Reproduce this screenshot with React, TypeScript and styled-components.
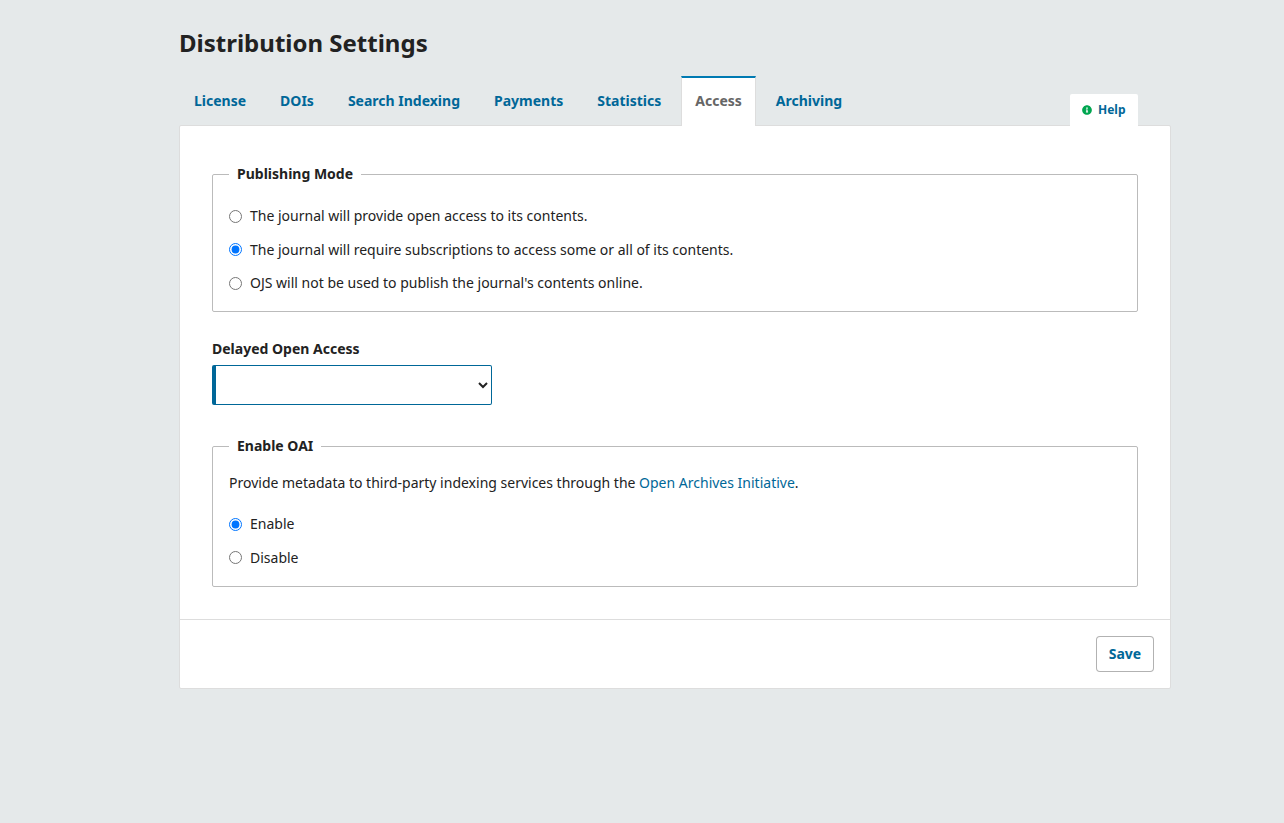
import React from 'react';
import styled, { createGlobalStyle } from 'styled-components';
import { FaInfoCircle } from 'react-icons/fa';

const TABS = ['License', 'DOIs', 'Search Indexing', 'Payments', 'Statistics', 'Access', 'Archiving'];

const MODES = [
  { id: 'open', label: 'The journal will provide open access to its contents.' },
  { id: 'subscription', label: 'The journal will require subscriptions to access some or all of its contents.' },
  { id: 'none', label: "OJS will not be used to publish the journal's contents online." },
];

const App = () => (
  <>
    <GlobalStyle />
    <Page>
      <Title>Distribution Settings</Title>
      <TabBar>
        <Tabs>
          {TABS.map((tab) => (
            <Tab key={tab} $active={tab === 'Access'}>
              {tab}
            </Tab>
          ))}
        </Tabs>
        <HelpButton>
          <FaInfoCircle size={10} color="#00a650" />
          Help
        </HelpButton>
      </TabBar>
      <Panel>
        <PanelBody>
          <Fieldset>
            <Legend>Publishing Mode</Legend>
            <Options>
              {MODES.map((mode) => (
                <Option key={mode.id}>
                  <Radio name="mode" defaultChecked={mode.id === 'subscription'} />
                  {mode.label}
                </Option>
              ))}
            </Options>
          </Fieldset>
          <Field>
            <FieldLabel htmlFor="delayed">Delayed Open Access</FieldLabel>
            <Select id="delayed">
              <option value=""></option>
            </Select>
          </Field>
          <Fieldset>
            <Legend>Enable OAI</Legend>
            <Description>
              Provide metadata to third-party indexing services through the{' '}
              <TextLink href="#!">Open Archives Initiative</TextLink>.
            </Description>
            <Options>
              <Option>
                <Radio name="oai" defaultChecked />
                Enable
              </Option>
              <Option>
                <Radio name="oai" />
                Disable
              </Option>
            </Options>
          </Fieldset>
        </PanelBody>
        <PanelFooter>
          <SaveButton>Save</SaveButton>
        </PanelFooter>
      </Panel>
    </Page>
  </>
);

export default App;

const GlobalStyle = createGlobalStyle`
  html, body {
    margin: 0;
    height: 100%;
    background: #e5e9ea;
  }
  body {
    font-family: 'Noto Sans', sans-serif;
    font-size: 14px;
    line-height: 20px;
    color: #222;
  }
`;

const Page = styled.main`
  width: 992px;
  margin-left: 179px;
  padding-top: 27px;
`;

const Title = styled.h1`
  margin: 0;
  font-size: 24px;
  line-height: 32px;
  font-weight: 700;
  color: #222;
`;

const TabBar = styled.div`
  display: flex;
  align-items: flex-end;
  justify-content: space-between;
  height: 50px;
  margin-top: 17px;
  margin-bottom: -1px;
  padding-left: 1px;
  padding-right: 33px;
  position: relative;
  z-index: 1;
`;

const Tabs = styled.nav`
  display: flex;
  gap: 6px;
  height: 100%;
`;

const Tab = styled.a<{ $active?: boolean }>`
  display: flex;
  align-items: center;
  padding: 0 13px 2px;
  font-size: 14px;
  font-weight: 700;
  border: 1px solid transparent;
  border-bottom: none;
  color: ${({ $active }) => ($active ? '#666' : '#006798')};
  ${({ $active }) =>
    $active &&
    `
    background: #fff;
    border-color: #ddd;
    border-top: 2px solid #007ab2;
    padding-bottom: 3px;
  `}
`;

const HelpButton = styled.button`
  display: flex;
  align-items: center;
  gap: 6px;
  height: 32px;
  width: 68px;
  padding: 0 0 1px 12px;
  border: none;
  border-radius: 2px 2px 0 0;
  background: #fff;
  color: #006798;
  font-family: inherit;
  font-size: 12px;
  font-weight: 700;
`;

const Panel = styled.section`
  background: #fff;
  border: 1px solid #ddd;
  border-radius: 2px;
`;

const PanelBody = styled.div`
  display: flex;
  flex-direction: column;
  gap: 27px;
  padding: 38px 32px 32px;
`;

const Fieldset = styled.fieldset`
  margin: 0;
  padding: 17px 16px 18px;
  border: 1px solid #bbb;
  border-radius: 2px;
  min-width: 0;
`;

const Legend = styled.legend`
  padding: 0 8px;
  font-size: 14px;
  line-height: 20px;
  font-weight: 700;
`;

const Options = styled.div`
  display: flex;
  flex-direction: column;
  gap: 13.5px;

  legend + & {
    margin-top: 5px;
  }
`;

const Option = styled.label`
  display: flex;
  align-items: center;
  gap: 8px;
  font-size: 14px;
  line-height: 20px;
`;

const Radio = styled.input.attrs({ type: 'radio' })`
  width: 13px;
  height: 13px;
  margin: 0;
  flex: none;
`;

const Description = styled.p`
  margin: 0 0 21px;
  font-size: 14px;
  line-height: 20px;
`;

const TextLink = styled.a`
  color: #006798;
  text-decoration: none;
`;

const Field = styled.div`
  display: flex;
  flex-direction: column;
  align-items: flex-start;
  margin-bottom: 4px;
`;

const FieldLabel = styled.label`
  font-size: 14px;
  line-height: 20px;
  font-weight: 700;
  margin-bottom: 6px;
`;

const Select = styled.select`
  width: 280px;
  height: 40px;
  padding: 0 8px;
  background: #fff;
  border: 1px solid #006798;
  border-left-width: 4px;
  border-radius: 2px;
  font-family: inherit;
  font-size: 14px;
  color: #222;
`;

const PanelFooter = styled.div`
  display: flex;
  justify-content: flex-end;
  padding: 16px;
  border-top: 1px solid #ddd;
`;

const SaveButton = styled.button`
  height: 36px;
  width: 58px;
  padding: 0;
  background: #fff;
  border: 1px solid rgba(0, 0, 0, 0.3);
  border-radius: 4px;
  color: #006798;
  font-family: inherit;
  font-size: 14px;
  font-weight: 700;
`;
